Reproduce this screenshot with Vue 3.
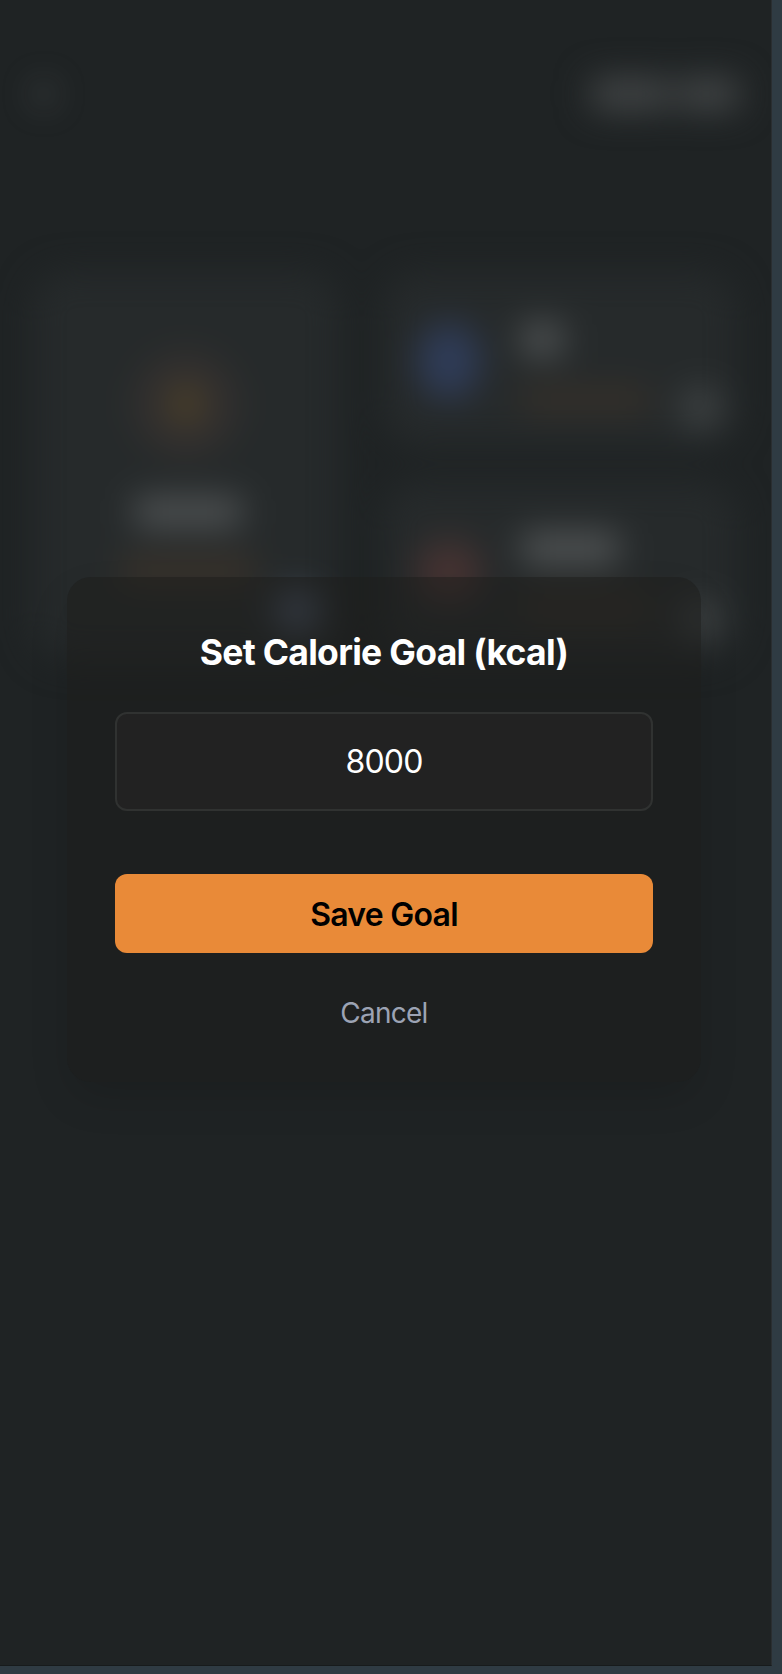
<script setup>
import { ref } from 'vue'

const goal = ref('8000')
const stats = [
  { id: 'water', tone: 'blue', title: 'short' },
  { id: 'heart', tone: 'red', title: 'long' },
]
</script>

<template>
  <div class="desktop">
    <main class="app">
      <div class="backdrop" aria-hidden="true">
        <header class="header">
          <svg class="back" viewBox="0 0 24 24"><path d="M15 4l-8 8 8 8" /></svg>
          <div class="heading"><i class="word first"></i><i class="word second"></i></div>
        </header>
        <section class="cards">
          <article class="card tall">
            <div class="halo"><i class="flame"></i></div>
            <i class="value"></i>
            <i class="label"></i>
            <i class="edit"></i>
          </article>
          <div class="column">
            <article v-for="s in stats" :key="s.id" class="card wide" :class="s.id">
              <i class="dot" :class="s.tone"></i>
              <div class="lines">
                <i class="title" :class="s.title"></i>
                <i class="sub"></i>
              </div>
              <i class="edit"></i>
            </article>
          </div>
        </section>
      </div>

      <div class="overlay">
        <form class="modal" @submit.prevent>
          <h2>Set Calorie Goal (kcal)</h2>
          <input v-model="goal" type="text" inputmode="numeric" aria-label="Calorie goal" />
          <button class="save" type="submit">Save Goal</button>
          <button class="cancel" type="button">Cancel</button>
        </form>
      </div>
    </main>
  </div>
</template>

<style>
body { background: #2f3b43; overflow: hidden; }
</style>

<style scoped>
* { box-sizing: border-box; }
.desktop { width: 782px; height: 1674px; background: #2f3b43; font-family: Inter, "Liberation Sans", sans-serif; }
.app { position: relative; width: 772px; height: 1666px; overflow: hidden; background: #1f2324; border-right: 1px solid #2a2e31; border-bottom: 1px solid #171b1c; }
i { display: block; }
.backdrop { height: 720px; padding: 68px 32px 0 32px; filter: blur(17px); }
.header { display: flex; align-items: center; justify-content: space-between; height: 52px; }
.back { width: 26px; height: 48px; fill: none; stroke: #8f9394; stroke-width: 4; }
.heading { display: flex; gap: 8px; }
.word { height: 32px; background: #434647; border-radius: 6px; }
.first { width: 78px; }
.second { width: 62px; }
.cards { display: flex; justify-content: space-between; margin-top: 152px; padding-right: 2px; }
.card { position: relative; background: #262a2b; border-radius: 36px; }
.tall { display: flex; flex-direction: column; align-items: center; width: 308px; height: 388px; padding-top: 79px; }
.halo { display: grid; place-items: center; width: 106px; height: 106px; border-radius: 50%; background: #33302e; }
.flame { width: 24px; height: 30px; border-radius: 50%; background: #5d4b24; }
.value { width: 108px; height: 30px; margin: 40px 0 0 4px; border-radius: 6px; background: #505354; }
.label { width: 136px; height: 26px; margin: 31px 0 0 4px; border-radius: 6px; background: #3d342b; }
.tall .edit { position: absolute; left: 243px; top: 317px; background: #4a5568; }
.column { display: flex; flex-direction: column; gap: 36px; }
.wide { display: flex; gap: 40px; width: 354px; height: 174px; padding: 51px 0 0 34px; }
.wide.heart { height: 176px; }
.dot { width: 64px; height: 76px; border-radius: 50%; }
.blue { background: #2f3c58; }
.red { width: 64px; height: 76px; background: linear-gradient(#302e2d, #4b3433 45%, #4b3433 60%, #302e2d); }
.lines { display: flex; flex-direction: column; }
.title { height: 33px; background: #505354; border-radius: 6px; }
.short { width: 42px; }
.long { width: 98px; margin-top: -1px; }
.sub { width: 128px; height: 26px; margin-top: 31px; background: #363029; border-radius: 6px; }
.edit { width: 44px; height: 44px; border-radius: 50%; background: #3e4243; }
.wide .edit { position: absolute; right: 14px; bottom: 16px; }
.overlay { position: absolute; inset: 0; padding: 577px 0 0 67px; }
.modal { display: flex; flex-direction: column; width: 634px; height: 505px; padding: 48px 48px 0; border-radius: 24px; background: rgba(28, 28, 25, .5); box-shadow: 0 18px 44px -6px rgba(0, 0, 0, .15); }
h2 { margin: 0 -10px; height: 56px; line-height: 56px; text-align: center; color: #fff; font-size: 35.5px; font-weight: 650; letter-spacing: -.7px; white-space: nowrap; }
input { width: 100%; height: 99px; margin: 31px 0 0; padding: 0; border: 2px solid #303231; border-radius: 12px; background: #222; color: #fff; text-align: center; font: 430 32px Inter, sans-serif; letter-spacing: -.8px; outline: 0; }
button { padding: 0; border: 0; background: none; font-family: inherit; }
.save { height: 79px; margin-top: 63px; padding-top: 2px; border-radius: 12px; background: #e98a38; color: #000; font-size: 32px; font-weight: 600; letter-spacing: -.75px; }
.cancel { height: 60px; margin-top: 30px; color: #9ca3b4; font-size: 28px; font-weight: 430; letter-spacing: -.75px; }
</style>
